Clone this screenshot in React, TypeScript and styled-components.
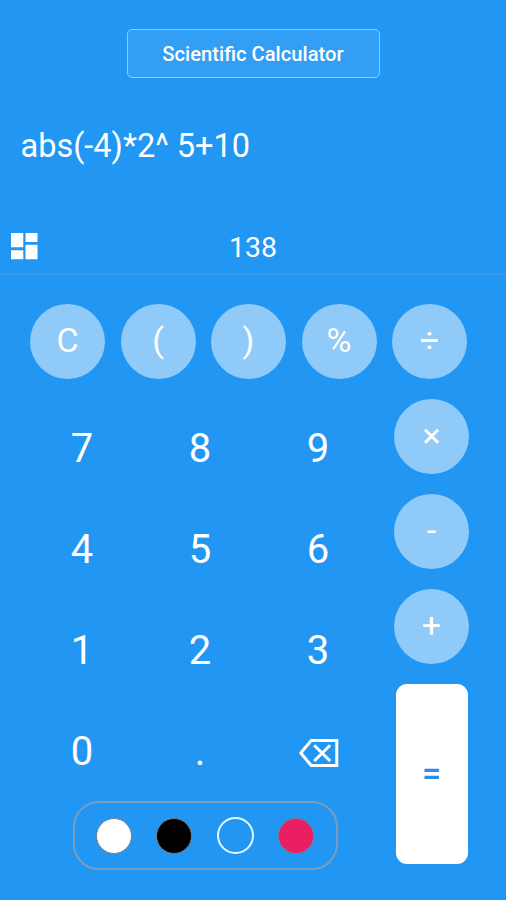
import React from "react";
import styled, { createGlobalStyle } from "styled-components";

const GlobalStyle = createGlobalStyle`
  * { box-sizing: border-box; }
  body { margin: 0; background: #2196f3; }
  button { margin: 0; padding: 0; border: 0; background: none; color: inherit; font: inherit; }
`;

const Screen = styled.main`
  width: 506px;
  height: 900px;
  overflow: hidden;
  display: flex;
  flex-direction: column;
  background: #2196f3;
  color: #fff;
  font-family: Roboto, sans-serif;
`;

const ModeButton = styled.button`
  align-self: center;
  width: 253px;
  height: 49px;
  margin-top: 29px;
  flex: none;
  border: 1.5px solid #8fcbfa;
  border-radius: 5px;
  background: #329ef4;
  font-size: 20.2px;
  font-weight: 500;
  line-height: 46px;
`;

const Expression = styled.div`
  height: 138px;
  padding: 48px 0 0 20.5px;
  font-size: 32.5px;
  line-height: 40px;
  white-space: pre;
`;

const ResultBar = styled.div`
  display: grid;
  grid-template-columns: 48px 1fr 48px;
  align-items: center;
  height: 59px;
  border-bottom: 2px solid #4198e8;
`;

const LayoutToggle = styled.button`
  display: flex;
  width: 48px;
  padding: 2px 0 0 11px;
`;

const Result = styled.output`
  text-align: center;
  font-size: 28.5px;
  line-height: 40px;
  padding-top: 6px;
`;

const FunctionRow = styled.div`
  display: grid;
  grid-template-columns: repeat(5, 75px);
  column-gap: 15.5px;
  padding: 28.5px 0 0 30px;
`;

const RoundKey = styled.button`
  width: 75px;
  height: 75px;
  border-radius: 50%;
  background: #90caf9;
  font-size: 34px;
  line-height: 73px;
  padding-bottom: 2px;
  text-align: center;
`;

const Lower = styled.div`
  display: flex;
  padding: 20px 0 0 23px;
`;

const PadColumn = styled.div`
  width: 354px;
`;

const DigitGrid = styled.div`
  display: grid;
  grid-template-columns: repeat(3, 118px);
  grid-auto-rows: 101px;
  height: 403px;
`;

const DigitKey = styled.button`
  display: flex;
  align-items: center;
  justify-content: center;
  font-size: 40px;
  line-height: 48px;
`;

const Palette = styled.div`
  display: flex;
  align-items: center;
  justify-content: space-between;
  width: 265px;
  height: 69px;
  margin: -1px 0 0 49.5px;
  padding: 1px 21.5px 0 21.5px;
  border: 2px solid #7e9cb8;
  border-radius: 26px;
`;

const Swatch = styled.button<{ $fill: string; $selected?: boolean }>`
  width: ${(p) => (p.$selected ? 37 : 36)}px;
  height: ${(p) => (p.$selected ? 37 : 36)}px;
  border-radius: 50%;
  border: ${(p) => (p.$selected ? "2px solid #e8f7ff" : "1.5px solid #7c7c80")};
  background: ${(p) => p.$fill};
`;

const OperatorColumn = styled.div`
  display: flex;
  flex-direction: column;
  align-items: center;
  gap: 20px;
  width: 75px;
  margin-left: 17px;
`;

const EqualsKey = styled.button`
  width: 72px;
  height: 180px;
  border-radius: 11px;
  background: #fff;
  color: #2f8be4;
  font-size: 34px;
  font-weight: 500;
  line-height: 178px;
  padding-bottom: 2px;
`;

const DashboardIcon = () => (
  <svg width="27" height="28" viewBox="0 0 27 28" fill="#fff" aria-hidden="true">
    <path d="M0 1h12.3v14.3H0zM14.5 1h12v9h-12zM0 18.2h12.3v9.1H0zM14.5 12.7h12v14.6h-12z" />
  </svg>
);

const BackspaceIcon = () => (
  <svg width="40" height="28" viewBox="0 0 40 28" fill="none" stroke="#fff" strokeWidth="3" aria-hidden="true">
    <path d="M12.2 1.5H37.8V26.5H12.2L1.8 14z" />
    <path d="M15.2 6.2L31.1 22M31.1 6.2L15.2 22" />
  </svg>
);

const BackspaceKey = styled(DigitKey)`
  padding: 2px 0 0 1px;
`;

const functions = ["C", "(", ")", "%", "÷"];
const digits = ["7", "8", "9", "4", "5", "6", "1", "2", "3", "0", "."];
const operators = ["×", "-", "+"];

export default function App() {
  return (
    <>
      <GlobalStyle />
      <Screen>
        <ModeButton>Scientific Calculator</ModeButton>
        <Expression>abs(-4)*2^ 5+10</Expression>
        <ResultBar>
          <LayoutToggle aria-label="Layout"><DashboardIcon /></LayoutToggle>
          <Result>138</Result>
        </ResultBar>
        <FunctionRow>
          {functions.map((key) => <RoundKey key={key}>{key}</RoundKey>)}
        </FunctionRow>
        <Lower>
          <PadColumn>
            <DigitGrid>
              {digits.map((key) => <DigitKey key={key}>{key}</DigitKey>)}
              <BackspaceKey aria-label="Backspace"><BackspaceIcon /></BackspaceKey>
            </DigitGrid>
            <Palette>
              <Swatch $fill="#fff" aria-label="White" />
              <Swatch $fill="#000" aria-label="Black" />
              <Swatch $fill="transparent" $selected aria-label="Blue" />
              <Swatch $fill="#e91e63" aria-label="Pink" />
            </Palette>
          </PadColumn>
          <OperatorColumn>
            {operators.map((key) => <RoundKey key={key}>{key}</RoundKey>)}
            <EqualsKey>=</EqualsKey>
          </OperatorColumn>
        </Lower>
      </Screen>
    </>
  );
}
